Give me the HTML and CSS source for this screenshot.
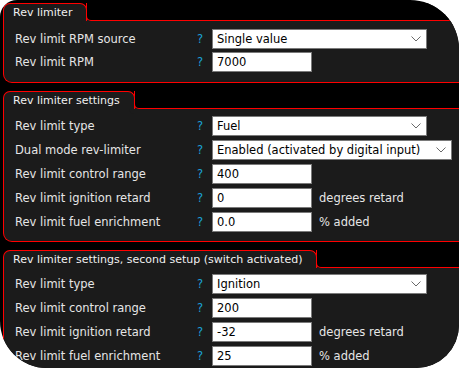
FILE: index.html
```html
<!DOCTYPE html>
<html>
<head>
<meta charset="utf-8">
<link rel="stylesheet" href="styles.css">
</head>
<body>
<div class="window">
  <section class="group g1">
    <div class="head"><div class="tab">Rev limiter</div><div class="fill"></div></div>
    <div class="body">
      <div class="row">
        <span class="label">Rev limit RPM source</span><span class="help">?</span>
        <div class="select"><span>Single value</span><svg class="chev" width="10" height="6" viewBox="0 0 10 6"><path d="M0.5 0.5 L5 5 L9.5 0.5" fill="none" stroke="#6a6a6a" stroke-width="1"/></svg></div>
      </div>
      <div class="row">
        <span class="label">Rev limit RPM</span><span class="help">?</span>
        <input class="field" type="text" value="7000">
      </div>
    </div>
  </section>

  <section class="group g2">
    <div class="head"><div class="tab">Rev limiter settings</div><div class="fill"></div></div>
    <div class="body">
      <div class="row">
        <span class="label">Rev limit type</span><span class="help">?</span>
        <div class="select"><span>Fuel</span><svg class="chev" width="10" height="6" viewBox="0 0 10 6"><path d="M0.5 0.5 L5 5 L9.5 0.5" fill="none" stroke="#6a6a6a" stroke-width="1"/></svg></div>
      </div>
      <div class="row">
        <span class="label">Dual mode rev-limiter</span><span class="help">?</span>
        <div class="select wide"><span>Enabled (activated by digital input)</span><svg class="chev" width="10" height="6" viewBox="0 0 10 6"><path d="M0.5 0.5 L5 5 L9.5 0.5" fill="none" stroke="#6a6a6a" stroke-width="1"/></svg></div>
      </div>
      <div class="row">
        <span class="label">Rev limit control range</span><span class="help">?</span>
        <input class="field" type="text" value="400">
      </div>
      <div class="row">
        <span class="label">Rev limit ignition retard</span><span class="help">?</span>
        <input class="field" type="text" value="0"><span class="unit">degrees retard</span>
      </div>
      <div class="row">
        <span class="label">Rev limit fuel enrichment</span><span class="help">?</span>
        <input class="field" type="text" value="0.0"><span class="unit">% added</span>
      </div>
    </div>
  </section>

  <section class="group g3">
    <div class="head"><div class="tab">Rev limiter settings, second setup (switch activated)</div><div class="fill"></div></div>
    <div class="body">
      <div class="row">
        <span class="label">Rev limit type</span><span class="help">?</span>
        <div class="select"><span>Ignition</span><svg class="chev" width="10" height="6" viewBox="0 0 10 6"><path d="M0.5 0.5 L5 5 L9.5 0.5" fill="none" stroke="#6a6a6a" stroke-width="1"/></svg></div>
      </div>
      <div class="row">
        <span class="label">Rev limit control range</span><span class="help">?</span>
        <input class="field" type="text" value="200">
      </div>
      <div class="row">
        <span class="label">Rev limit ignition retard</span><span class="help">?</span>
        <input class="field" type="text" value="-32"><span class="unit">degrees retard</span>
      </div>
      <div class="row">
        <span class="label">Rev limit fuel enrichment</span><span class="help">?</span>
        <input class="field" type="text" value="25"><span class="unit">% added</span>
      </div>
    </div>
  </section>
</div>
</body>
</html>
```

FILE: styles.css
```css
html, body {
  margin: 0;
  padding: 0;
  background: #ffffff;
}

body {
  font-family: "DejaVu Sans", Verdana, sans-serif;
  font-size: 11.5px;
  color: #e6e6e6;
}

.window {
  width: 459px;
  height: 368px;
  background: #000000;
  border-radius: 17px 49px 43px 47px;
  overflow: hidden;
  padding-top: 3px;
  box-sizing: border-box;
}

.group {
  width: 500px;
  margin-left: 3px;
  margin-bottom: 8px;
}

.head {
  display: flex;
  height: 18px;
}

.tab {
  position: relative;
  z-index: 1;
  height: 18px;
  box-sizing: border-box;
  border: 1px solid #ff0000;
  border-bottom: none;
  border-radius: 7px 7px 0 0;
  background: #1b1b1b;
  padding: 0 14px 0 9px;
  line-height: 17px;
  font-size: 11px;
  color: #f0f0f0;
  white-space: nowrap;
}

.fill {
  flex: 1;
  height: 18px;
  box-sizing: border-box;
  margin-left: -1px;
  border-left: 1px solid #ff0000;
  border-bottom: 1px solid #ff0000;
  border-bottom-left-radius: 5px;
  background: #000000;
  box-shadow: -5px 5px 0 0 #1b1b1b;
}

.body {
  background: #1b1b1b;
  border: 1px solid #ff0000;
  border-top: none;
  border-radius: 0 0 9px 9px;
  padding: 8px 11px 10px 11px;
  display: flex;
  flex-direction: column;
  gap: 3px;
}

.g2 .body {
  padding-top: 7px;
  padding-bottom: 9px;
  gap: 4px;
}

.g3 .body {
  padding-top: 6px;
  gap: 4px;
}

.row {
  display: flex;
  align-items: center;
  height: 20px;
}

.label {
  width: 182px;
  flex: none;
  white-space: nowrap;
}

.help {
  width: 15px;
  flex: none;
  color: #1aa0d8;
}

.select {
  width: 215px;
  height: 20px;
  box-sizing: border-box;
  border: 1px solid #7a7a7a;
  background: #ffffff;
  color: #000000;
  display: flex;
  align-items: center;
  justify-content: space-between;
  padding: 0 5px 0 4px;
  white-space: nowrap;
}

.select.wide {
  width: 240px;
}

.chev {
  display: block;
  flex: none;
}

.field {
  width: 100px;
  height: 20px;
  box-sizing: border-box;
  margin: 0;
  border: 1px solid #7a7a7a;
  background: #ffffff;
  color: #000000;
  font: inherit;
  padding: 0 4px;
  outline: none;
}

.unit {
  margin-left: 7px;
  white-space: nowrap;
}
```
